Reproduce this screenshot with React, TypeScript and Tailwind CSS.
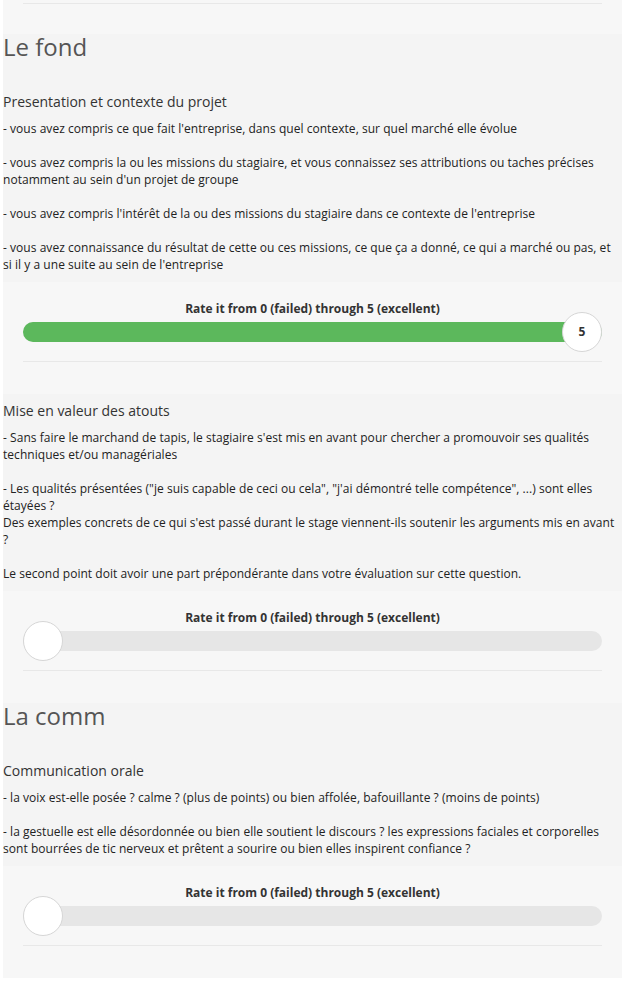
const font = { fontFamily: '"Open Sans", "Noto Sans", sans-serif' }

type Question = {
  title: string
  paragraphs: string[][]
  score: number | null
}

type Section = {
  heading?: string
  questions: Question[]
}

const sections: Section[] = [
  {
    heading: "Le fond",
    questions: [
      {
        title: "Presentation et contexte du projet",
        paragraphs: [
          ["- vous avez compris ce que fait l'entreprise, dans quel contexte, sur quel marché elle évolue"],
          ["- vous avez compris la ou les missions du stagiaire, et vous connaissez ses attributions ou taches précises notamment au sein d'un projet de groupe"],
          ["- vous avez compris l'intérêt de la ou des missions du stagiaire dans ce contexte de l'entreprise"],
          ["- vous avez connaissance du résultat de cette ou ces missions, ce que ça a donné, ce qui a marché ou pas, et si il y a une suite au sein de l'entreprise"],
        ],
        score: 5,
      },
      {
        title: "Mise en valeur des atouts",
        paragraphs: [
          ["- Sans faire le marchand de tapis, le stagiaire s'est mis en avant pour chercher a promouvoir ses qualités techniques et/ou managériales"],
          [
            '- Les qualités présentées ("je suis capable de ceci ou cela", "j\'ai démontré telle compétence", ...) sont elles étayées ?',
            "Des exemples concrets de ce qui s'est passé durant le stage viennent-ils soutenir les arguments mis en avant ?",
          ],
          ["Le second point doit avoir une part prépondérante dans votre évaluation sur cette question."],
        ],
        score: null,
      },
    ],
  },
  {
    heading: "La comm",
    questions: [
      {
        title: "Communication orale",
        paragraphs: [
          ["- la voix est-elle posée ? calme ? (plus de points) ou bien affolée, bafouillante ? (moins de points)"],
          ["- la gestuelle est elle désordonnée ou bien elle soutient le discours ? les expressions faciales et corporelles sont bourrées de tic nerveux et prêtent a sourire ou bien elles inspirent confiance ?"],
        ],
        score: null,
      },
    ],
  },
]

function RatingSlider({ score }: { score: number | null }) {
  const filled = score !== null && score > 0
  return (
    <div className="bg-[#f7f7f7] px-5 pt-[18px] pb-[32px]">
      <p className="text-center text-[12px] leading-[17px] font-bold text-[#333]">
        Rate it from 0 (failed) through 5 (excellent)
      </p>
      <div className="relative mt-[5px] h-5 rounded-full bg-[#e6e6e6]">
        {filled ? (
          <div
            className="h-5 rounded-full bg-[#5cb85c]"
            style={{ width: `${(score! / 5) * 100}%` }}
          />
        ) : null}
        <div
          className={
            "absolute top-[-10px] flex h-10 w-10 items-center justify-center rounded-full border border-[#d6d6d6] bg-white text-[12px] font-bold text-[#333] " +
            (score === 5 ? "right-0" : "left-0")
          }
        >
          {filled ? score : ""}
        </div>
      </div>
      <div className="mt-[19px] border-t border-[#e8e8e8]" />
    </div>
  )
}

function QuestionBlock({ question, first }: { question: Question; first: boolean }) {
  return (
    <>
      <div className={"bg-[#f4f4f4] pb-[9px] " + (first ? "" : "pt-[7px]")}>
        <h3 className="text-[14px] leading-[20px] text-[#333]">{question.title}</h3>
        <div className="mt-[8px] flex flex-col gap-[17px] text-[12px] leading-[17px] tracking-[0.04px] text-[#222]">
          {question.paragraphs.map((lines, i) => (
            <p key={i}>
              {lines.map((line, j) => (
                <span key={j}>
                  {j > 0 ? <br /> : null}
                  {line}
                </span>
              ))}
            </p>
          ))}
        </div>
      </div>
      <RatingSlider score={question.score} />
    </>
  )
}

export default function App() {
  return (
    <div className="min-h-screen bg-white" style={font}>
      <div className="ml-[3px] w-[619px]">
        {/* tail of the previous rating block */}
        <div className="h-[34px] bg-[#f7f7f7] px-5 pt-[3px]">
          <div className="border-t border-[#e8e8e8]" />
        </div>
        {sections.map((section, si) => (
          <div key={si}>
            <div className="bg-[#f4f4f4]">
              <h2 className="text-[24px] leading-[26px] text-[#555]">{section.heading}</h2>
              <div className="h-[32px]" />
            </div>
            {section.questions.map((q, qi) => (
              <QuestionBlock key={qi} question={q} first={qi === 0} />
            ))}
          </div>
        ))}
      </div>
    </div>
  )
}
